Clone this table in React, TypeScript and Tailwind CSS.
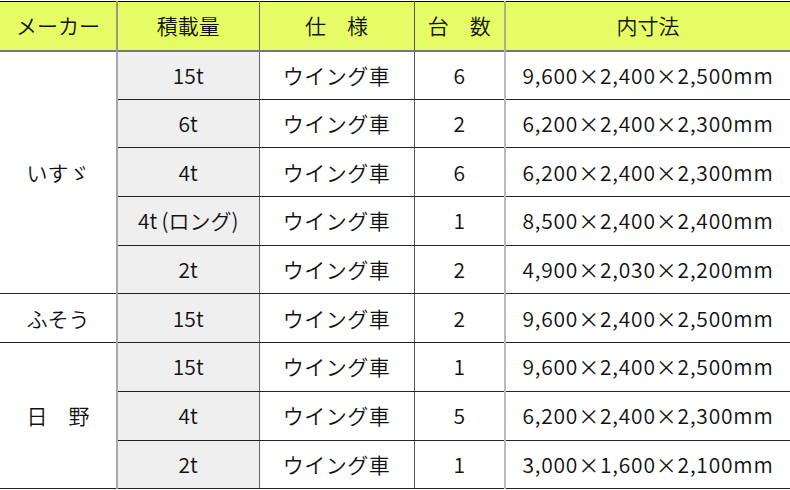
import React from "react";

type Row = { load: string; spec: string; count: string; size: string };

const groups: { maker: string; rows: Row[] }[] = [
  {
    maker: "いすゞ",
    rows: [
      { load: "15t", spec: "ウイング車", count: "6", size: "9,600×2,400×2,500mm" },
      { load: "6t", spec: "ウイング車", count: "2", size: "6,200×2,400×2,300mm" },
      { load: "4t", spec: "ウイング車", count: "6", size: "6,200×2,400×2,300mm" },
      { load: "4t\u2009(ロング)", spec: "ウイング車", count: "1", size: "8,500×2,400×2,400mm" },
      { load: "2t", spec: "ウイング車", count: "2", size: "4,900×2,030×2,200mm" },
    ],
  },
  {
    maker: "ふそう",
    rows: [{ load: "15t", spec: "ウイング車", count: "2", size: "9,600×2,400×2,500mm" }],
  },
  {
    maker: "日　野",
    rows: [
      { load: "15t", spec: "ウイング車", count: "1", size: "9,600×2,400×2,500mm" },
      { load: "4t", spec: "ウイング車", count: "5", size: "6,200×2,400×2,300mm" },
      { load: "2t", spec: "ウイング車", count: "1", size: "3,000×1,600×2,100mm" },
    ],
  },
];

export default function App() {
  return (
    <div
      className="w-[790px] h-[490px] bg-white pt-[1px] text-[#111] font-[350]"
      style={{ fontFamily: '"Noto Sans CJK JP", "Noto Sans", sans-serif' }}
    >
      <table className="w-[790px] border-collapse table-fixed text-[21px] leading-none">
        <colgroup>
          <col className="w-[117px]" />
          <col className="w-[142px]" />
          <col className="w-[155px]" />
          <col className="w-[91px]" />
          <col className="w-[285px]" />
        </colgroup>
        <thead>
          <tr className="h-[49px] bg-[#e6fc66] border-t border-t-black border-b-2 border-b-[#7a7a6a]">
            <th className="font-[350] text-center border-r-2 border-r-[#9a9a80]">メーカー</th>
            <th className="font-[350] text-center border-r border-r-[#666]">積載量</th>
            <th className="font-[350] text-center border-r border-r-[#555]">仕　様</th>
            <th className="font-[350] text-center border-r-2 border-r-[#b0b090]">台　数</th>
            <th className="font-[350] text-center">内寸法</th>
          </tr>
        </thead>
        <tbody>
          {groups.map((g, gi) =>
            g.rows.map((r, ri) => (
              <tr key={gi + "-" + ri} className="h-[48.7px]">
                {ri === 0 && (
                  <td
                    rowSpan={g.rows.length}
                    className="text-center border-r-2 border-r-[#a8a8a8] border-b border-b-[#222]"
                  >
                    {g.maker}
                  </td>
                )}
                <td className="text-center bg-[#efefef] border-r border-r-[#666] border-b border-b-[#222]">
                  {r.load}
                </td>
                <td className="text-center border-r border-r-[#555] border-b border-b-[#222] tracking-[0.5px]">{r.spec}</td>
                <td className="text-center border-r-2 border-r-[#bbb] border-b border-b-[#222]">{r.count}</td>
                <td className="text-center border-b border-b-[#222] tracking-[0.8px]">{r.size}</td>
              </tr>
            ))
          )}
        </tbody>
      </table>
    </div>
  );
}
